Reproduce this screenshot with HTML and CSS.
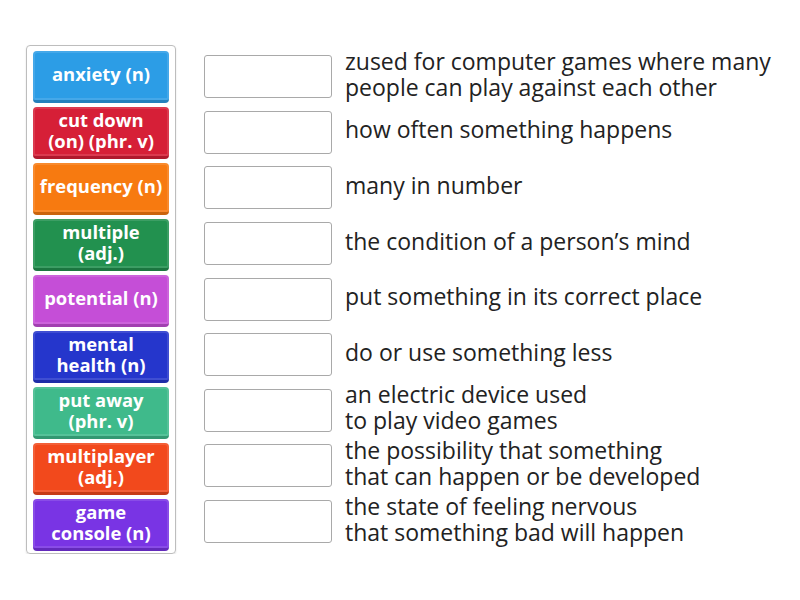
FILE: index.html
```html
<!DOCTYPE html>
<html>
<head>
<meta charset="utf-8">
<link rel="stylesheet" href="styles.css">
</head>
<body>
<div class="game">
  <div class="bank">
    <div class="tile t1">anxiety (n)</div>
    <div class="tile t2">cut down<br>(on) (phr. v)</div>
    <div class="tile t3">frequency (n)</div>
    <div class="tile t4">multiple<br>(adj.)</div>
    <div class="tile t5">potential (n)</div>
    <div class="tile t6">mental<br>health (n)</div>
    <div class="tile t7">put away<br>(phr. v)</div>
    <div class="tile t8">multiplayer<br>(adj.)</div>
    <div class="tile t9">game<br>console (n)</div>
  </div>
  <div class="rows">
    <div class="row"><div class="slot"></div><div class="def">zused for computer games where many<br>people can play against each other</div></div>
    <div class="row"><div class="slot"></div><div class="def">how often something happens</div></div>
    <div class="row"><div class="slot"></div><div class="def">many in number</div></div>
    <div class="row"><div class="slot"></div><div class="def">the condition of a person’s mind</div></div>
    <div class="row"><div class="slot"></div><div class="def">put something in its correct place</div></div>
    <div class="row"><div class="slot"></div><div class="def">do or use something less</div></div>
    <div class="row"><div class="slot"></div><div class="def">an electric device used<br>to play video games</div></div>
    <div class="row"><div class="slot"></div><div class="def">the possibility that something<br>that can happen or be developed</div></div>
    <div class="row"><div class="slot"></div><div class="def">the state of feeling nervous<br>that something bad will happen</div></div>
  </div>
</div>
</body>
</html>
```
FILE: styles.css
```css
html, body {
  margin: 0;
  padding: 0;
  background: #ffffff;
}
body {
  font-family: "Open Sans", "Liberation Sans", sans-serif;
  color: #222;
}
.game {
  display: flex;
  align-items: flex-start;
  padding: 45px 0 0 26px;
}
.bank {
  width: 136px;
  padding: 5px 6px 2px 6px;
  border: 1px solid #bdbdbd;
  border-radius: 4px;
  display: flex;
  flex-direction: column;
  gap: 4px;
  box-shadow: 0 1px 2px rgba(0,0,0,0.12);
}
.tile {
  height: 52px;
  box-sizing: border-box;
  border-radius: 4px;
  display: flex;
  align-items: center;
  justify-content: center;
  text-align: center;
  color: #fff;
  font-weight: 700;
  font-size: 18.4px;
  line-height: 21px;
  padding-bottom: 4px;
  border-bottom: 3px solid rgba(0,0,0,0.18);
  box-shadow: inset 0 0 0 2px rgba(255,255,255,0.12);
}
.t1 { background: #2c9de6; }
.t2 { background: #d61f37; }
.t3 { background: #f77a10; }
.t4 { background: #22914f; }
.t5 { background: #c54ed7; }
.t6 { background: #2536cc; }
.t7 { background: #3fba8b; }
.t8 { background: #f2491c; }
.t9 { background: #7934e4; }
.rows {
  margin-left: 28px;
  padding-top: 6px;
  display: flex;
  flex-direction: column;
  gap: 4px;
}
.row {
  height: 51.6px;
  display: flex;
  align-items: center;
}
.slot {
  width: 126px;
  height: 41px;
  border: 1px solid #a9a9a9;
  border-radius: 3px;
  background: #fff;
  flex: none;
}
.def {
  margin-left: 13px;
  margin-top: -6px;
  font-size: 23px;
  line-height: 26px;
  color: #222;
  white-space: nowrap;
}
```
